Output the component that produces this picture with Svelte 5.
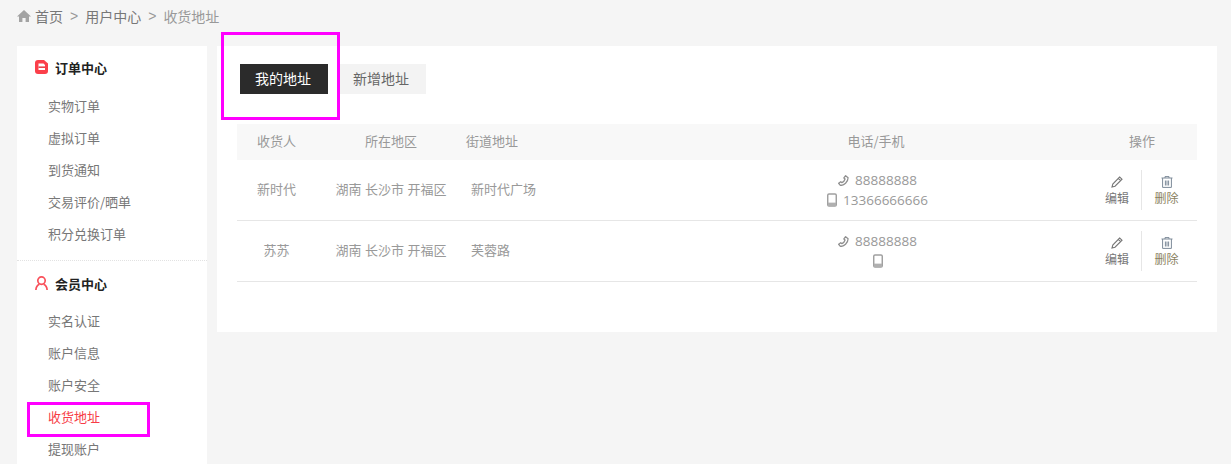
<script>
  const groups = [
    { title: '订单中心', icon: 'order', items: ['实物订单', '虚拟订单', '到货通知', '交易评价/晒单', '积分兑换订单'] },
    { title: '会员中心', icon: 'user', items: ['实名认证', '账户信息', '账户安全', '收货地址', '提现账户'] },
  ];

  const rows = [
    { name: '新时代', area: '湖南 长沙市 开福区', street: '新时代广场', tel: '88888888', mobile: '13366666666' },
    { name: '苏苏', area: '湖南 长沙市 开福区', street: '芙蓉路', tel: '88888888', mobile: '' },
  ];
</script>

<div class="page">
  <div class="crumbs">
    <svg class="home" viewBox="0 0 14 12" width="14" height="12">
      <path d="M7 0 L14 6.4 L12 6.4 L12 12 L8.6 12 L8.6 8 L5.4 8 L5.4 12 L2 12 L2 6.4 L0 6.4 Z" fill="#a3a3a3" />
    </svg>
    <a href="#home">首页</a>
    <span class="sep">&gt;</span>
    <a href="#user">用户中心</a>
    <span class="sep">&gt;</span>
    <span class="current">收货地址</span>
  </div>

  <div class="body">
    <aside class="side">
      {#each groups as g (g.title)}
        <section class="group">
          <h3>
            {#if g.icon === 'order'}
              <svg viewBox="0 0 13 14" width="13" height="14">
                <path d="M3 0 H9 L13 3.5 V11 Q13 14 10 14 H3 Q0 14 0 11 V3 Q0 0 3 0 Z" fill="#fb3f4a" />
                <path d="M3.5 3.5 H8.5 L10 5 V10 H3.5 Z" fill="#fff" />
                <rect x="3.5" y="6.4" width="6.5" height="1.6" fill="#e8434c" />
              </svg>
            {:else}
              <svg viewBox="0 0 13 14" width="13" height="14" fill="none" stroke="#f9505a" stroke-width="1.7">
                <circle cx="6.5" cy="4.6" r="3.7" />
                <path d="M0.9 14 C1 10.8 2.6 9 4.4 8.2 M12.1 14 C12 10.8 10.4 9 8.6 8.2" />
              </svg>
            {/if}
            <span>{g.title}</span>
          </h3>
          <ul>
            {#each g.items as item (item)}
              <li class:active={item === '收货地址'}>{item}</li>
            {/each}
          </ul>
        </section>
      {/each}
      <i class="mark mark-side"></i>
    </aside>

    <main class="main">
      <div class="tabs">
        <button class="tab on">我的地址</button>
        <button class="tab">新增地址</button>
      </div>
      <i class="mark mark-tab"></i>

      <div class="table">
        <div class="row head">
          <div class="cell">收货人</div>
          <div class="cell">所在地区</div>
          <div class="cell street-head">街道地址</div>
          <div class="cell">电话/手机</div>
          <div class="cell">操作</div>
        </div>
        {#each rows as r (r.name)}
          <div class="row">
            <div class="cell">{r.name}</div>
            <div class="cell area">{r.area}</div>
            <div class="cell street">{r.street}</div>
            <div class="phones">
              <span class="line">
                <svg viewBox="0 0 12 12" width="11" height="11">
                  <path d="M8.3 0.8 L11 3 C11 7.5 6.5 11.5 2.6 11.4 L0.7 9 L3 7.3 L4.3 8.4 C5.8 7.7 7.2 6 7.7 4.4 L6.4 3.2 Z" fill="none" stroke="#8f8f8f" stroke-width="1.4" stroke-linejoin="round" />
                </svg>
                {r.tel}
              </span>
              <span class="line">
                <svg viewBox="0 0 11 15" width="10" height="14">
                  <rect x="0.8" y="0.8" width="9.4" height="13.4" rx="1.4" fill="none" stroke="#a0a0a0" stroke-width="1.6" />
                  <rect x="1" y="10.4" width="9" height="3.6" fill="#b0b0b0" />
                </svg>
                {r.mobile}
              </span>
            </div>
            <div class="ops">
              <a href="#edit" class="op">
                <svg viewBox="0 0 12 12" width="12" height="12" fill="none" stroke="#777" stroke-width="1.1">
                  <path d="M8.6 1 L11 3.2 L4 10.2 L1 11 L1.8 8 Z M7.2 2.4 L9.6 4.6" />
                </svg>
                <span>编辑</span>
              </a>
              <a href="#del" class="op">
                <svg viewBox="0 0 12 12" width="12" height="12" fill="none" stroke="#7d8a99" stroke-width="1">
                  <path d="M0.5 2 H11.5 M4 2 V0.6 H8 V2 M1.6 2 V11.4 H10.4 V2 M4.4 4.5 V9.5 M6 4.5 V9.5 M7.6 4.5 V9.5" />
                </svg>
                <span>删除</span>
              </a>
            </div>
          </div>
        {/each}
      </div>
    </main>
  </div>
</div>

<style>
  :global(body) {
    background: #f5f5f5;
    overflow: hidden;
  }
  .page {
    height: 464px;
    overflow: hidden;
    padding: 0 14px 0 17px;
    font-family: "Noto Sans CJK SC", "Noto Sans", sans-serif;
    font-size: 13px;
    color: #888;
  }
  .crumbs {
    display: flex;
    align-items: center;
    height: 32px;
    gap: 7px;
    font-size: 14px;
    line-height: 30px;
    color: #888;
  }
  .crumbs a { color: #777; text-decoration: none; height: 30px; }
  .home { margin-right: -3px; }
  .sep { color: #999; font-family: "Liberation Sans", sans-serif; height: 30px; }
  .current { color: #999; height: 30px; }

  .body {
    display: flex;
    align-items: flex-start;
    gap: 10px;
    margin-top: 14px;
  }

  .side {
    position: relative;
    flex: none;
    width: 190px;
    background: #fff;
  }
  .group { padding: 10px 0 10px; }
  .group + .group { border-top: 1px dotted #e2e2e2; padding-top: 11px; }
  h3 {
    display: flex;
    align-items: center;
    gap: 7px;
    height: 22px;
    margin: 0 0 12px;
    padding-left: 18px;
    font-size: 13px;
    font-weight: 700;
    color: #222;
  }
  .group + .group h3 { margin-bottom: 11px; }
  ul { list-style: none; margin: 0; padding: 0 0 0 31px; }
  li { height: 32px; line-height: 32px; color: #777; }
  li.active { color: #f73c46; }

  .main {
    position: relative;
    flex: none;
    width: 1000px;
    height: 286px;
    background: #fff;
    padding: 18px 20px 0;
    box-sizing: border-box;
  }
  .tabs { display: flex; gap: 10px; padding-left: 3px; }
  .tab {
    width: 88px;
    height: 30px;
    border: 0;
    padding: 0 2px 3px 0;
    background: #f3f3f3;
    color: #666;
    font: inherit;
    font-size: 14px;
  }
  .tab.on { background: #2b2b2b; color: #fff; }

  .table { margin-top: 30px; }
  .row {
    display: grid;
    grid-template-columns: 79px 150px 199px 422px 110px;
    align-items: center;
    height: 61px;
    box-sizing: border-box;
    border-bottom: 1px solid #e6e6e6;
    text-align: center;
    color: #999;
  }
  .row.head {
    height: 36px;
    border-bottom: 0;
    background: #f8f8f8;
  }
  .cell { padding-bottom: 3px; }
  .area { word-spacing: 0.6px; }
  .street-head { text-align: left; }
  .street { text-align: left; padding-left: 5px; }
  .phones { display: flex; flex-direction: column; padding-left: 3px; }
  .line {
    display: flex;
    align-items: center;
    justify-content: center;
    gap: 6px;
    height: 20px;
    font-family: "Open Sans", "Noto Sans", sans-serif;
    font-size: 13.5px;
  }
  .ops { display: flex; justify-content: flex-start; padding-left: 6px; }
  .op {
    display: flex;
    flex-direction: column;
    align-items: center;
    width: 48px;
    height: 40px;
    padding-top: 6px;
    box-sizing: border-box;
    color: #777;
    text-decoration: none;
    font-size: 12px;
    line-height: 18px;
  }
  .op span { margin-top: 1px; }
  .op + .op { width: 50px; border-left: 1px solid #e6e6e6; color: #8a7f60; }

  .mark {
    position: absolute;
    display: block;
    box-sizing: border-box;
    border: 3px solid #ff00ff;
    pointer-events: none;
  }
  .mark-tab { left: 4px; top: -14px; width: 119px; height: 88px; }
  .mark-side { left: 10px; top: 356px; width: 123px; height: 35px; }
</style>
